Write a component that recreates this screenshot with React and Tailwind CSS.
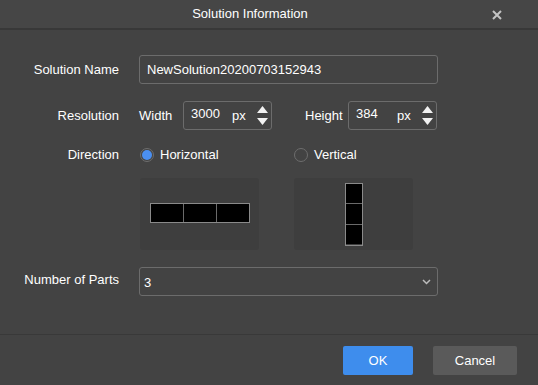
import React, { useState } from 'react';

const font = { fontFamily: '"Liberation Sans", Arial, sans-serif' };

const Spinner = () => (
  <div className="flex flex-col items-center gap-[5px] mr-[3px]">
    <svg width="11" height="7" viewBox="0 0 11 7"><path d="M5.5 0 L11 7 L0 7 Z" fill="#f2f2f2" /></svg>
    <svg width="11" height="7" viewBox="0 0 11 7"><path d="M0 0 L11 0 L5.5 7 Z" fill="#f2f2f2" /></svg>
  </div>
);

const NumberBox = ({ value }) => (
  <div className="w-[89px] h-[29px] border border-[#6c6c6c] rounded-[3px] flex items-center pl-[7px]">
    <span className="w-[41px] text-[13px] text-white -mt-[4px]">{value}</span>
    <span className="flex-1 text-[13px] text-white">px</span>
    <Spinner />
  </div>
);

const Radio = ({ checked, label, onClick }) => (
  <button onClick={onClick} className="flex items-center gap-[6px] h-[16px]">
    {checked ? (
      <span className="w-[14px] h-[14px] rounded-full border border-[#6d6d6d] flex items-center justify-center">
        <span className="w-[10px] h-[10px] rounded-full bg-[#4b8ff0]" />
      </span>
    ) : (
      <span className="w-[14px] h-[14px] rounded-full border border-[#6d6d6d]" />
    )}
    <span className="text-[13px] text-white">{label}</span>
  </button>
);

export default function App() {
  const [dir, setDir] = useState('h');

  return (
    <div className="w-[538px] h-[385px] bg-[#434343] flex flex-col overflow-hidden" style={font}>
      {/* Title bar */}
      <div className="h-[30px] shrink-0 flex items-center bg-[#464646] border-b-2 border-[#383838] relative">
        <div className="flex-1 text-center pr-[38px] text-[13px] text-white">Solution Information</div>
        <svg className="absolute left-[492px] top-[10px]" width="10" height="10" viewBox="0 0 10 10">
          <path d="M1 1 L9 9 M9 1 L1 9" stroke="#c4c4c4" strokeWidth="2" />
        </svg>
      </div>

      {/* Form */}
      <div className="flex-1 flex flex-col pt-[25px]">
        <div className="flex items-center">
          <div className="w-[119px] text-right text-[13px] text-white">Solution Name</div>
          <div className="ml-[20px] w-[299px] h-[29px] border border-[#6c6c6c] rounded-[3px] flex items-center pl-[7px] text-[13px] text-white">
            NewSolution20200703152943
          </div>
        </div>

        <div className="flex items-center mt-[17px]">
          <div className="w-[119px] text-right text-[13px] text-white">Resolution</div>
          <div className="ml-[20px] w-[44px] text-[13px] text-white">Width</div>
          <NumberBox value="3000" />
          <div className="ml-[33px] w-[43px] text-[13px] text-white">Height</div>
          <NumberBox value="384" />
        </div>

        <div className="flex mt-[17px]">
          <div className="w-[119px] text-right text-[13px] text-white leading-[16px]">Direction</div>
          <div className="ml-[21px] w-[154px] flex flex-col">
            <Radio checked={dir === 'h'} label="Horizontal" onClick={() => setDir('h')} />
            <div className="mt-[15px] w-[119px] h-[72px] bg-[#3e3e3e] rounded-[3px] flex items-center justify-center">
              <div className="flex border border-[#8a8a8a] -mt-[2px]">
                <div className="w-[33px] h-[18px] bg-black border-r border-[#6a6a6a]" />
                <div className="w-[33px] h-[18px] bg-black border-r border-[#6a6a6a]" />
                <div className="w-[32px] h-[18px] bg-black" />
              </div>
            </div>
          </div>
          <div className="flex flex-col">
            <Radio checked={dir === 'v'} label="Vertical" onClick={() => setDir('v')} />
            <div className="mt-[15px] w-[119px] h-[72px] bg-[#3e3e3e] rounded-[3px] flex justify-center">
              <div className="flex flex-col border border-[#8a8a8a] mt-[5px] h-[63px] self-start">
                <div className="w-[16px] h-[20px] bg-black border-b border-[#6a6a6a]" />
                <div className="w-[16px] h-[21px] bg-black border-b border-[#6a6a6a]" />
                <div className="w-[16px] h-[19px] bg-black" />
              </div>
            </div>
          </div>
        </div>

        <div className="flex items-center mt-[17px]">
          <div className="w-[119px] text-right text-[13px] text-white -mt-[4px]">Number of Parts</div>
          <div className="ml-[20px] w-[299px] h-[29px] border border-[#6c6c6c] rounded-[3px] flex items-center pl-[4px] pr-[6px] text-[13px] text-white">
            <span className="flex-1 mt-[2px]">3</span>
            <svg width="9" height="6" viewBox="0 0 9 6"><path d="M1 1 L4.5 4.5 L8 1" stroke="#bdbdbd" strokeWidth="1.5" fill="none" /></svg>
          </div>
        </div>
      </div>

      {/* Footer */}
      <div className="h-[51px] shrink-0 border-t border-[#393939] flex items-start justify-end pt-[11px] pr-[21px] gap-[20px]">
        <button className="w-[70px] h-[29px] bg-[#3e8ded] rounded-[2px] text-[13px] text-white">OK</button>
        <button className="w-[84px] h-[29px] bg-[#5a5a5a] rounded-[2px] text-[13px] text-white">Cancel</button>
      </div>
    </div>
  );
}
